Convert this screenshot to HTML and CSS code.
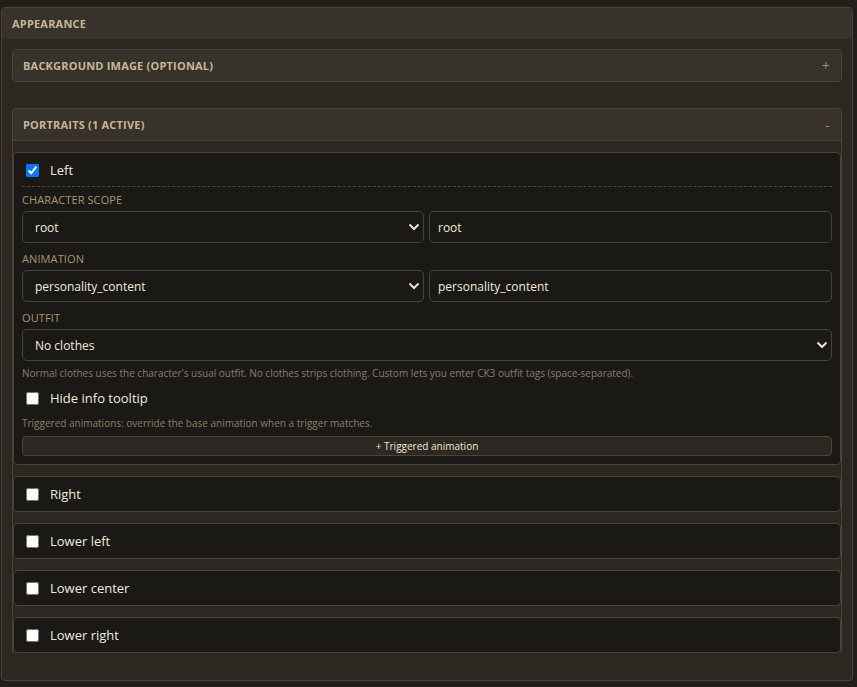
FILE: index.html
```html
<!DOCTYPE html>
<html>
<head>
<meta charset="utf-8">
<link rel="stylesheet" href="styles.css">
</head>
<body>
<div class="panel">
  <div class="panel-head">Appearance</div>
  <div class="panel-body">
    <div class="section">
      <div class="section-head"><span>Background image (optional)</span><span class="toggle">+</span></div>
    </div>
    <div class="section open">
      <div class="section-head"><span>Portraits (1 active)</span><span class="toggle minus">-</span></div>
      <div class="section-body">
        <div class="card">
          <label class="card-head divided"><input type="checkbox" checked><span>Left</span></label>
          <div class="field first">
            <div class="field-label">Character scope</div>
            <div class="pair">
              <div class="select"><span>root</span><svg width="12" height="8" viewBox="0 0 12 8"><path d="M1.5 1.5 L6 6 L10.5 1.5" fill="none" stroke="#ece4d6" stroke-width="2"/></svg></div>
              <div class="input">root</div>
            </div>
          </div>
          <div class="field">
            <div class="field-label">Animation</div>
            <div class="pair">
              <div class="select"><span>personality_content</span><svg width="12" height="8" viewBox="0 0 12 8"><path d="M1.5 1.5 L6 6 L10.5 1.5" fill="none" stroke="#ece4d6" stroke-width="2"/></svg></div>
              <div class="input">personality_content</div>
            </div>
          </div>
          <div class="field">
            <div class="field-label">Outfit</div>
            <div class="select"><span>No clothes</span><svg width="12" height="8" viewBox="0 0 12 8"><path d="M1.5 1.5 L6 6 L10.5 1.5" fill="none" stroke="#ece4d6" stroke-width="2"/></svg></div>
            <p class="help">Normal clothes uses the character's usual outfit. No clothes strips clothing. Custom lets you enter CK3 outfit tags (space-separated).</p>
          </div>
          <label class="check-row"><input type="checkbox"><span>Hide info tooltip</span></label>
          <p class="help">Triggered animations: override the base animation when a trigger matches.</p>
          <button class="add-btn">+ Triggered animation</button>
        </div>
        <div class="card"><label class="card-head"><input type="checkbox"><span>Right</span></label></div>
        <div class="card"><label class="card-head"><input type="checkbox"><span>Lower left</span></label></div>
        <div class="card"><label class="card-head"><input type="checkbox"><span>Lower center</span></label></div>
        <div class="card"><label class="card-head"><input type="checkbox"><span>Lower right</span></label></div>
      </div>
    </div>
  </div>
</div>
</body>
</html>
```
FILE: styles.css
```css
* { box-sizing: border-box; }
html, body { margin: 0; padding: 0; }
body {
  background: #211d18;
  font-family: "Open Sans", "Noto Sans", sans-serif;
  color: #efe8dc;
  width: 857px;
  height: 687px;
  overflow: hidden;
}
.panel {
  margin: 7px 4px 0 1px;
  height: 674px;
  background: #2c2720;
  border: 1px solid #4a4436;
  border-radius: 4px;
  overflow: hidden;
}
.panel-head {
  height: 31px;
  background: #37322a;
  padding: 0 10px;
  display: flex;
  align-items: center;
  font-size: 11px;
  font-weight: 700;
  text-transform: uppercase;
  color: #c8b797;
  letter-spacing: 0.2px;
}
.panel-body {
  padding: 10px 10px 0 10px;
}
.section {
  border: 1px solid #4a4436;
  border-radius: 4px;
  margin-bottom: 26px;
  overflow: hidden;
}
.section.open {
  border-bottom: none;
  border-radius: 4px 4px 0 0;
}
.section-head {
  height: 31px;
  background: #37322a;
  padding: 0 10px;
  display: flex;
  align-items: center;
  justify-content: space-between;
  font-size: 11px;
  font-weight: 700;
  text-transform: uppercase;
  color: #c8b797;
  letter-spacing: 0.2px;
}
.section.open .section-head {
  height: 32px;
  border-bottom: 1px solid #4a4436;
}
.toggle {
  color: #9f8d72;
  font-weight: 400;
  font-size: 14px;
  margin-right: 1px;
}
.toggle.minus { margin-right: 1px; font-size: 13px; }
.section-body {
  padding-top: 11px;
  display: flex;
  flex-direction: column;
  gap: 11px;
}
.card {
  background: #1b1915;
  border: 1px solid #4a4436;
  border-radius: 4px;
  padding: 8px;
}
.card-head, .check-row {
  display: flex;
  align-items: center;
  height: 18px;
  font-size: 13px;
  color: #f1ebdf;
}
.card-head.divided {
  padding-bottom: 7px;
  border-bottom: 1px dashed #4f4839;
  box-sizing: content-box;
  height: 18px;
}
input[type="checkbox"] {
  width: 13px;
  height: 13px;
  margin: 0 11px 0 4px;
  accent-color: #0075ff;
}
.field { margin-top: 9px; }
.field.first { margin-top: 6px; }
.field-label {
  font-size: 11px;
  line-height: 14px;
  text-transform: uppercase;
  color: #a89677;
  margin-bottom: 4px;
  letter-spacing: 0.1px;
}
.pair {
  display: flex;
  gap: 5px;
}
.pair > * { flex: 1 1 0; }
.select, .input {
  height: 32px;
  border: 1px solid #4a4436;
  border-radius: 5px;
  background: #1b1915;
  display: flex;
  align-items: center;
  font-size: 12px;
  color: #f1ebdf;
}
.select {
  justify-content: space-between;
  padding: 0 3px 0 12px;
}
.input { padding: 0 8px; }
.help {
  margin: 5px 0 0;
  font-size: 10px;
  line-height: 14px;
  color: #8a7d68;
}
.check-row {
  height: 26px;
  margin-top: 5px;
}
.check-row + .help { margin-top: 5px; }
.add-btn {
  display: block;
  width: 100%;
  height: 20px;
  margin-top: 6px;
  background: #2d2821;
  border: 1px solid #4a4436;
  border-radius: 4px;
  color: #efe8dc;
  font-family: inherit;
  font-size: 10px;
  padding: 0;
}
```
